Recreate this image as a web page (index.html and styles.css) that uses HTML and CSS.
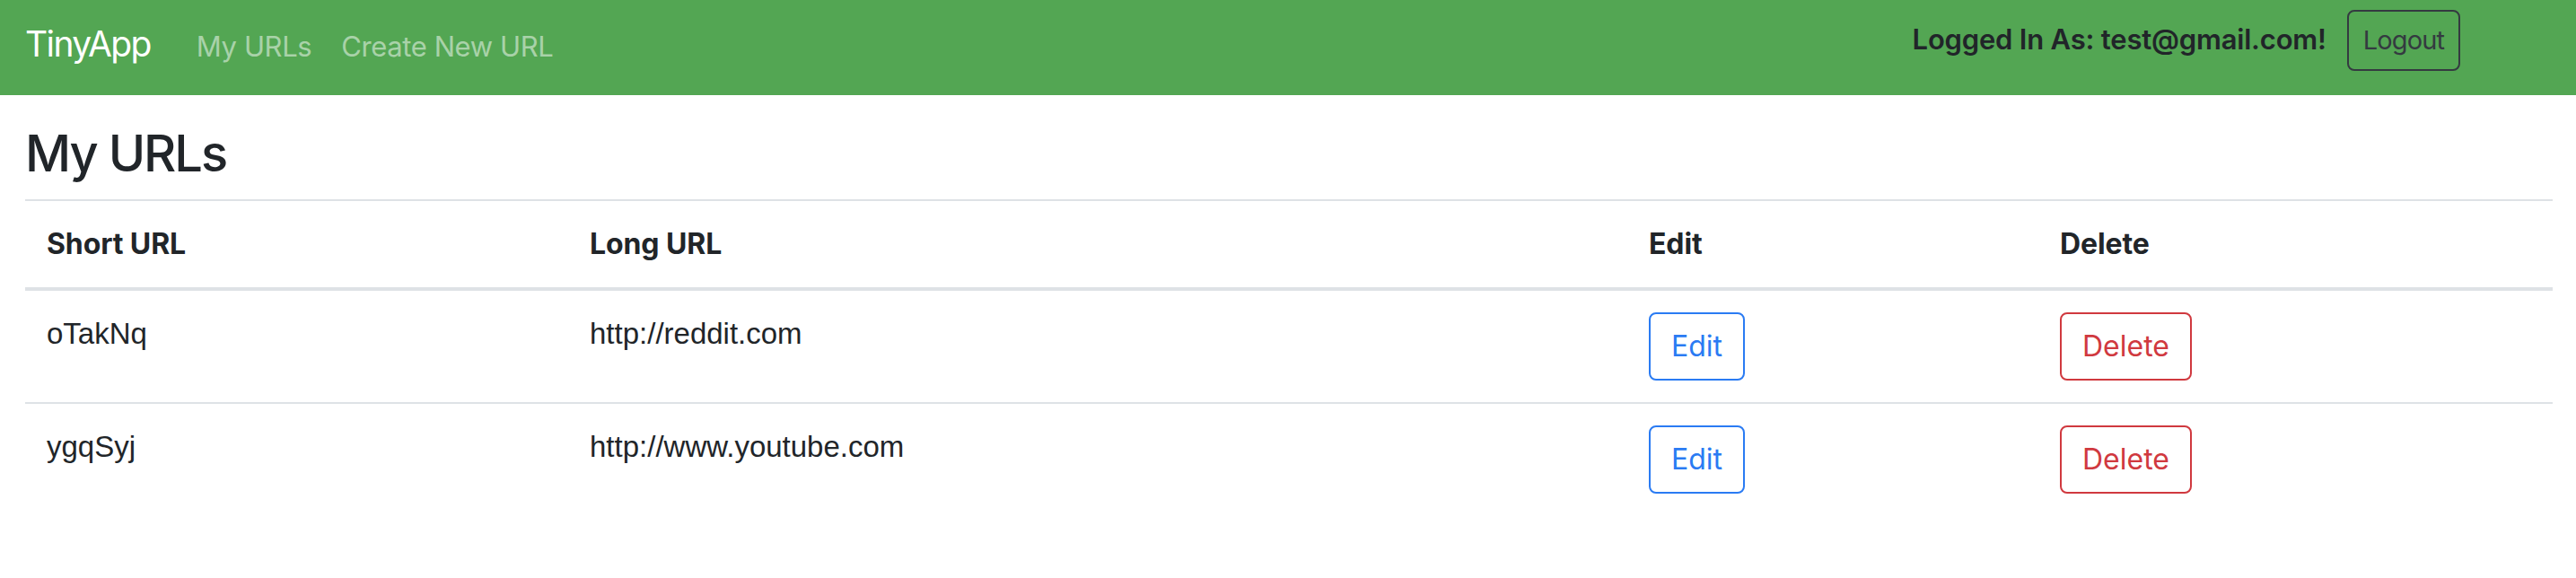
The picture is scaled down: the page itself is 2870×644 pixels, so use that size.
FILE: index.html
```html
<!DOCTYPE html>
<html lang="en">
<head>
<meta charset="utf-8">
<title>TinyApp</title>
<link rel="stylesheet" href="styles.css">
</head>
<body>
<nav class="navbar">
  <div class="nav-left">
    <a class="brand" href="#">TinyApp</a>
    <a class="nav-link" href="#">My URLs</a>
    <a class="nav-link" href="#">Create New URL</a>
  </div>
  <div class="nav-right">
    <span class="user">Logged In As: test@gmail.com!</span>
    <button class="btn btn-dark-outline">Logout</button>
  </div>
</nav>
<main class="main">
  <h2 class="title">My URLs</h2>
  <table class="url-table">
    <colgroup>
      <col class="c-short">
      <col class="c-long">
      <col class="c-edit">
      <col class="c-del">
    </colgroup>
    <thead>
      <tr><th>Short URL</th><th>Long URL</th><th>Edit</th><th>Delete</th></tr>
    </thead>
    <tbody>
      <tr>
        <td>oTakNq</td>
        <td>http://reddit.com</td>
        <td><button class="btn btn-edit">Edit</button></td>
        <td><button class="btn btn-del">Delete</button></td>
      </tr>
      <tr>
        <td>ygqSyj</td>
        <td>http://www.youtube.com</td>
        <td><button class="btn btn-edit">Edit</button></td>
        <td><button class="btn btn-del">Delete</button></td>
      </tr>
    </tbody>
  </table>
</main>
</body>
</html>
```
FILE: styles.css
```css
* { box-sizing: border-box; }
html, body { margin: 0; padding: 0; background: #fff; }
body {
  font-family: Inter, "Noto Sans", sans-serif;
  color: #212529;
}
.navbar {
  height: 106px;
  background: #53a653;
  display: flex;
  justify-content: space-between;
  align-items: flex-start;
  padding: 0 129px 0 28px;
}
.nav-left {
  display: flex;
  align-items: baseline;
  padding-top: 19px;
}
.brand {
  font-size: 39px;
  line-height: 60px;
  color: #fff;
  text-decoration: none;
  letter-spacing: -1.6px;
  margin-right: 51px;
}
.nav-link {
  font-size: 31px;
  line-height: 46px;
  color: rgba(255,255,255,0.5);
  text-decoration: none;
  margin-right: 33px;
  letter-spacing: -0.4px;
}
.nav-right {
  display: flex;
  align-items: baseline;
  padding-top: 11px;
}
.user {
  font-size: 31px;
  line-height: 46px;
  font-weight: 600;
  color: #212529;
  margin-right: 23px;
  letter-spacing: -0.2px;
}
.btn {
  font-family: Inter, "Noto Sans", sans-serif;
  background: transparent;
  border: 2px solid;
  border-radius: 8px;
  cursor: pointer;
}
.btn-dark-outline {
  font-size: 29px;
  line-height: 42px;
  padding: 11px 16px;
  color: #343a40;
  border-color: #343a40;
  letter-spacing: -0.9px;
}
.main {
  padding: 32px 26px 0 28px;
}
.title {
  font-size: 56px;
  font-weight: 500;
  line-height: 67px;
  margin: 0 0 17px;
  letter-spacing: -2px;
}
.url-table {
  width: 2816px;
  border-collapse: collapse;
  table-layout: fixed;
}
.c-short { width: 605px; }
.c-long { width: 1180px; }
.c-edit { width: 458px; }
.c-del { width: 573px; }
.url-table th {
  font-size: 32px;
  line-height: 48px;
  font-weight: 700;
  text-align: left;
  padding: 24px;
  border-top: 2px solid #dee2e6;
  border-bottom: 4px solid #dee2e6;
  vertical-align: bottom;
  letter-spacing: -0.1px;
}
.url-table td {
  font-family: "Liberation Sans", Arial, sans-serif;
  font-size: 33px;
  line-height: 48px;
  padding: 24px;
  border-top: 2px solid #dee2e6;
  vertical-align: top;
}
.btn-edit, .btn-del {
  font-size: 32px;
  line-height: 48px;
  padding: 12px 23px;
  display: block;
}
.btn-edit { color: #2a7bf3; border-color: #2a7bf3; }
.btn-del { color: #d0393f; border-color: #d0393f; }
```
